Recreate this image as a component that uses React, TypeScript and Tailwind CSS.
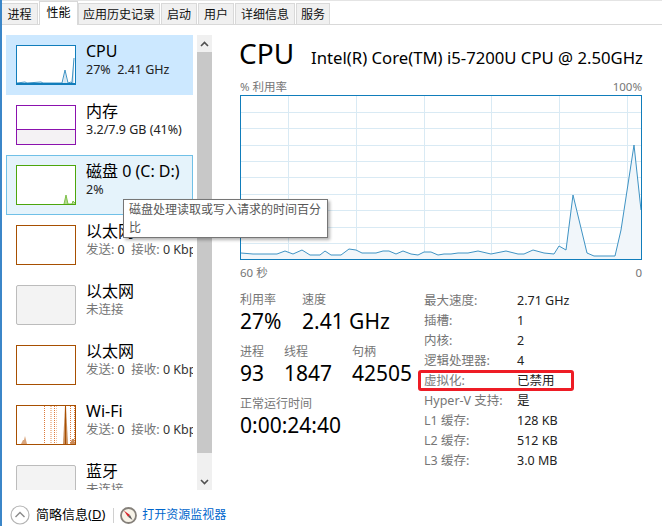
import React from 'react';

const font = { fontFamily: '"Noto Sans", "Noto Sans CJK SC", sans-serif' };

const tabs = [
  { name: '进程', w: 'w-[37px]' },
  { name: '性能', w: 'w-[39px]', active: true },
  { name: '应用历史记录', w: 'w-[82px]' },
  { name: '启动', w: 'w-[36px]' },
  { name: '用户', w: 'w-[36px]' },
  { name: '详细信息', w: 'w-[60px]' },
  { name: '服务', w: 'w-[34px]' },
];

const cpuLine =
  '241,256 253,257 277,257 285,254 293,257 302,253 310,258 320,258 325,254 331,258 341,258 349,252 356,253 362,256 376,256 383,254 389,254 396,257 403,254 411,257 418,258 424,255 431,255 438,258 444,257 451,257 458,256 468,256 478,254 491,257 506,254 518,257 524,257 533,253 544,256 554,257 559,249 566,253 573,198 587,256 594,259 615,259 621,233 634,148 641,213';

function CpuChart() {
  const vs = [288, 356, 424, 491, 559, 627];
  const hs = [115, 131, 148, 164, 180, 197, 213, 230, 246];
  return (
    <svg width="402" height="165" viewBox="240 98 402 165" className="block">
      <rect x="240.5" y="98.5" width="401" height="164" fill="#fff" />
      {vs.map((x) => (
        <line key={x} x1={x + 0.5} x2={x + 0.5} y1="98" y2="262" stroke="#d9eaf4" />
      ))}
      {hs.map((y) => (
        <line key={y} x1="240" x2="641" y1={y + 0.5} y2={y + 0.5} stroke="#d9eaf4" />
      ))}
      <polygon points={`241,262 ${cpuLine} 641,262`} fill="#f1f6fa" />
      <polyline points={cpuLine} fill="none" stroke="#3f93c4" strokeWidth="1" />
      <rect x="240.5" y="98.5" width="401" height="164" fill="none" stroke="#117dbb" />
    </svg>
  );
}

function CpuThumb() {
  return (
    <div className="w-[60px] h-[40px] border border-[#117dbb] bg-white">
      <svg width="58" height="38" viewBox="0 0 58 38" className="block">
        <polygon points="46,38 48,24 50,38" fill="#d6e7f2" />
        <polygon points="54,38 57,12 57,38" fill="#d6e7f2" />
        <polyline points="0,37 8,36 10,37 24,36 26,37 45,37 48,24 51,37 54,36 55,37 57,12" fill="none" stroke="#3f93c4" />
        <rect x="0" y="37" width="58" height="1" fill="#117dbb" />
      </svg>
    </div>
  );
}

function MemThumb() {
  return (
    <div className="w-[60px] h-[40px] border border-[#8b12ae] flex flex-col bg-white">
      <div className="h-[24px] border-b border-[#8b12ae]" />
      <div className="flex-1 bg-[#f4f2f4]" />
    </div>
  );
}

function DiskThumb() {
  return (
    <div className="w-[60px] h-[40px] border border-[#4da60c] bg-white">
      <svg width="58" height="38" viewBox="0 0 58 38" className="block">
        <polygon points="47,38 49,29 51,38 55,38 56,35 58,37 58,38" fill="#b4d98f" />
        <polyline points="47,38 49,29 51,38 55,38 56,35 58,37" fill="none" stroke="#7dbf4a" />
      </svg>
    </div>
  );
}

function NetThumb() {
  return <div className="w-[60px] h-[40px] border border-[#a74f01] bg-white" />;
}

function OffThumb() {
  return <div className="w-[60px] h-[40px] border border-[#bcbcbc] rounded-[2px] bg-[#f3f3f3]" />;
}

function WifiThumb() {
  const strong = [27, 37, 53, 57];
  const soft = [33, 34, 39];
  return (
    <div className="w-[60px] h-[40px] border border-[#a74f01] bg-white">
      <svg width="58" height="38" viewBox="0 0 58 38" className="block">
        {strong.map((x) => (
          <line key={x} x1={x + 0.5} x2={x + 0.5} y1="0" y2="38" stroke="#dd7a3c" strokeDasharray="1 1" />
        ))}
        {soft.map((x) => (
          <line key={x} x1={x + 0.5} x2={x + 0.5} y1="0" y2="38" stroke="#f0c4a6" strokeDasharray="1 1" />
        ))}
        <polygon points="4,38 6,34 7,34 8,30 9,34 10,38" fill="#d9a57d" />
        <polygon points="46,38 48,0 49,0 51,38" fill="#c98f5e" />
        <line x1="48.5" x2="48.5" y1="0" y2="38" stroke="#a74f01" />
        <polygon points="53,38 55,33 57,33 58,38" fill="#c98a58" />
      </svg>
    </div>
  );
}

const items = [
  { name: 'CPU', sub: '27%  2.41 GHz', thumb: <CpuThumb />, cls: 'bg-[#cce8ff]', subCls: 'text-[#222]' },
  { name: '内存', sub: '3.2/7.9 GB (41%)', thumb: <MemThumb />, cls: '', subCls: 'text-[#222]' },
  { name: '磁盘 0 (C: D:)', sub: '2%', thumb: <DiskThumb />, cls: 'bg-[#e5f3fb] border border-[#70c0e7]', subCls: 'text-[#222]' },
  { name: '以太网', net: true, thumb: <NetThumb />, cls: '' },
  { name: '以太网', sub: '未连接', thumb: <OffThumb />, cls: '', subCls: 'text-[#767676]' },
  { name: '以太网', net: true, thumb: <NetThumb />, cls: '' },
  { name: 'Wi-Fi', net: true, thumb: <WifiThumb />, cls: '' },
  { name: '蓝牙', sub: '未连接', thumb: <OffThumb />, cls: '', subCls: 'text-[#767676]' },
];

function SideItem({ item }: { item: (typeof items)[number] }) {
  return (
    <div className={`box-border w-[187px] h-[60px] shrink-0 flex gap-[10px] pl-[10px] pt-[10px] overflow-hidden ${item.cls}`}>
      <div className={item.cls.includes('border') ? '-ml-px -mt-px' : ''}>{item.thumb}</div>
      <div className={`whitespace-nowrap ${item.cls.includes('border') ? '-mt-px' : ''}`}>
        <div className="text-[16px] leading-[20px] -mt-[4px] text-black">{item.name}</div>
        {item.net ? (
          <div className="text-[12.5px] leading-[16px] mt-[1px] text-[#767676]">
            发送: <span className="text-[#333]">0</span>&nbsp; 接收: <span className="text-[#333]">0 Kbps</span>
          </div>
        ) : (
          <div className={`text-[12.5px] leading-[16px] mt-[1px] whitespace-pre ${item.subCls}`}>{item.sub}</div>
        )}
      </div>
    </div>
  );
}

function Stat({ label, value, w }: { label: string; value: string; w: string }) {
  return (
    <div className={w}>
      <div className="text-[12px] leading-[16px] text-[#767676]">{label}</div>
      <div className="text-[21px] leading-[26px] text-black whitespace-nowrap">{value}</div>
    </div>
  );
}

const specs = [
  ['最大速度:', '2.71 GHz'],
  ['插槽:', '1'],
  ['内核:', '2'],
  ['逻辑处理器:', '4'],
  ['虚拟化:', '已禁用'],
  ['Hyper-V 支持:', '是'],
  ['L1 缓存:', '128 KB'],
  ['L2 缓存:', '512 KB'],
  ['L3 缓存:', '3.0 MB'],
];

export default function App() {
  return (
    <div style={font} className="relative box-border w-[662px] h-[526px] overflow-hidden bg-white border-l-2 border-[#3b86c8] flex flex-col">
      <div className="h-[25px] shrink-0 flex items-end border-t border-t-[#e4e4e4] border-b border-b-[#d9d9d9] -ml-[2px] pl-[1px]">
        {tabs.map((t) =>
          t.active ? (
            <div key={t.name} className={`${t.w} box-border h-[24px] -mb-px bg-white border border-b-0 border-[#d9d9d9] text-[12px] leading-[22px] text-center text-black`}>
              {t.name}
            </div>
          ) : (
            <div key={t.name} className={`${t.w} box-border h-[21px] mr-[1px] bg-[#f0f0f0] border-x border-t border-[#d9d9d9] text-[12px] leading-[21px] text-center text-[#111]`}>
              {t.name}
            </div>
          ),
        )}
      </div>

      <div className="flex flex-1 min-h-0">
        <div className="w-[212px] shrink-0 pl-[4px] pt-[10px] flex gap-[4px]">
          <div className="w-[187px] h-[455px] overflow-hidden flex flex-col">
            {items.map((item, i) => (
              <SideItem key={i} item={item} />
            ))}
          </div>
          <div className="w-[15px] h-[455px] bg-[#f0f0f0] flex flex-col">
            <div className="h-[17px] flex items-center justify-center">
              <svg width="9" height="6" viewBox="0 0 9 6"><path d="M1 5 L4.5 1.5 L8 5" fill="none" stroke="#505050" strokeWidth="1.6" /></svg>
            </div>
            <div className="h-[401px] bg-[#c8c8c8]" />
            <div className="flex-1 flex items-end justify-center pb-[5px]">
              <svg width="9" height="6" viewBox="0 0 9 6"><path d="M1 1 L4.5 4.5 L8 1" fill="none" stroke="#505050" strokeWidth="1.6" /></svg>
            </div>
          </div>
        </div>

        <div className="pl-[26px] flex-1">
          <div className="flex items-baseline gap-[17px] h-[47px] pt-[8px] -ml-[1px] whitespace-nowrap">
            <span className="text-[28px] leading-[40px] text-black">CPU</span>
            <span className="text-[16.7px] leading-[20px] text-black">Intel(R) Core(TM) i5-7200U CPU @ 2.50GHz</span>
          </div>
          <div className="flex justify-between text-[11.5px] leading-[14px] text-[#767676] w-[402px] mt-[8px] mb-[1px]">
            <span>% 利用率</span>
            <span>100%</span>
          </div>
          <CpuChart />
          <div className="flex justify-between text-[11.5px] leading-[14px] text-[#767676] w-[402px] mt-[6px]">
            <span>60 秒</span>
            <span>0</span>
          </div>

          <div className="flex mt-[12px]">
            <div className="w-[184px] shrink-0">
              <div className="flex">
                <Stat label="利用率" value="27%" w="w-[62px]" />
                <Stat label="速度" value="2.41 GHz" w="w-[100px]" />
              </div>
              <div className="flex mt-[10px]">
                <Stat label="进程" value="93" w="w-[44px]" />
                <Stat label="线程" value="1847" w="w-[68px]" />
                <Stat label="句柄" value="42505" w="w-[60px]" />
              </div>
              <div className="mt-[10px]">
                <Stat label="正常运行时间" value="0:00:24:40" w="w-[120px]" />
              </div>
            </div>
            <div className="w-[218px] -mt-[1px] text-[12.5px]">
              {specs.map(([k, v]) => (
                <div key={k} className="relative flex h-[20px] leading-[20px] whitespace-nowrap">
                  <span className="w-[93px] text-[#767676]">{k}</span>
                  <span className="text-[#222]">{v}</span>
                  {k === '虚拟化:' && (
                    <div className="absolute left-[-6px] top-[-1px] w-[156px] h-[21px] border-[3px] border-[#ee1c25] rounded-[3px]" />
                  )}
                </div>
              ))}
            </div>
          </div>
        </div>
      </div>

      <div className="h-[36px] shrink-0 flex items-center pl-[8px] pt-[14px]">
        <svg width="20" height="20" viewBox="0 0 20 20">
          <circle cx="10" cy="10" r="9" fill="#fff" stroke="#b4b4b4" strokeWidth="1.2" />
          <path d="M5.5 12 L10 7.5 L14.5 12" fill="none" stroke="#8a8a8a" strokeWidth="1.4" />
        </svg>
        <span className="ml-[6px] text-[13px] text-black whitespace-nowrap">简略信息(<span className="underline">D</span>)</span>
        <div className="ml-[8px] w-px h-[15px] bg-[#d0d0d0]" />
        <svg className="ml-[6px]" width="17" height="17" viewBox="0 0 17 17">
          <circle cx="8.5" cy="8.5" r="7.5" fill="#f7f3e8" stroke="#85807a" strokeWidth="1.8" />
          <path d="M3.8 3.6 L10 8 L8 9.8 Z" fill="#d8262c" />
          <path d="M12.5 13 L10 8 L8 9.8 Z" fill="#5a5a5a" />
        </svg>
        <span className="ml-[5px] text-[12px] text-[#0066cc] whitespace-nowrap">打开资源监视器</span>
      </div>

      <div className="absolute left-[121px] top-[199px] box-border w-[205px] h-[39px] px-[5px] py-px bg-white border border-[#767676] shadow-[2px_2px_3px_rgba(0,0,0,0.3)] text-[12px] leading-[18px] text-[#575757]">
        磁盘处理读取或写入请求的时间百分比
      </div>
    </div>
  );
}
